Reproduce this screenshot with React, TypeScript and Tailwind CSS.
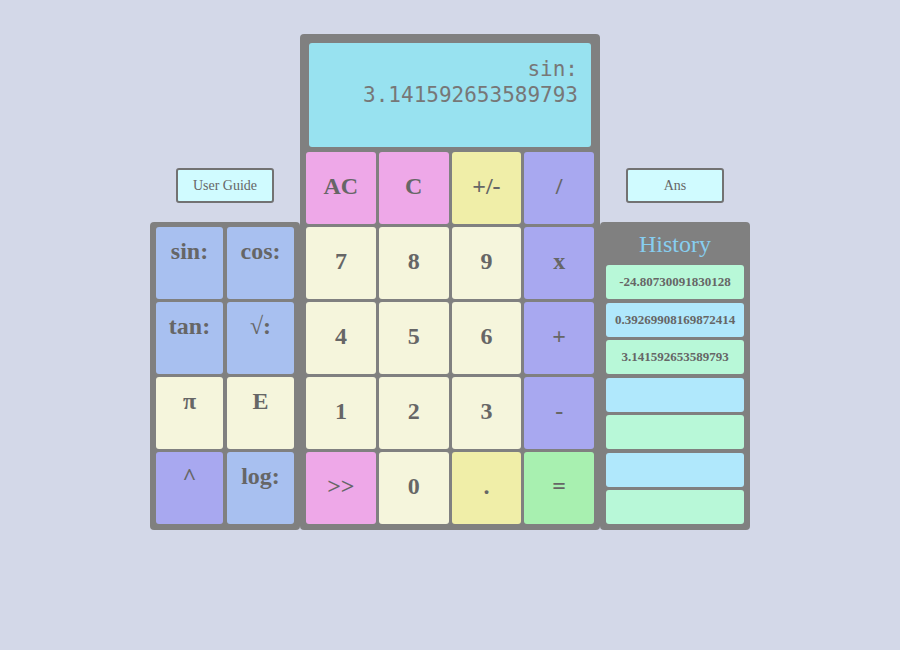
const serif = { fontFamily: '"Liberation Serif", "Times New Roman", serif' }

const keys: { label: string; bg: string }[] = [
  { label: "AC", bg: "bg-[#eea8e8]" },
  { label: "C", bg: "bg-[#eea8e8]" },
  { label: "+/-", bg: "bg-[#f0eea8]" },
  { label: "/", bg: "bg-[#a8a8f0]" },
  { label: "7", bg: "bg-[#f5f5dc]" },
  { label: "8", bg: "bg-[#f5f5dc]" },
  { label: "9", bg: "bg-[#f5f5dc]" },
  { label: "x", bg: "bg-[#a8a8f0]" },
  { label: "4", bg: "bg-[#f5f5dc]" },
  { label: "5", bg: "bg-[#f5f5dc]" },
  { label: "6", bg: "bg-[#f5f5dc]" },
  { label: "+", bg: "bg-[#a8a8f0]" },
  { label: "1", bg: "bg-[#f5f5dc]" },
  { label: "2", bg: "bg-[#f5f5dc]" },
  { label: "3", bg: "bg-[#f5f5dc]" },
  { label: "-", bg: "bg-[#a8a8f0]" },
  { label: ">>", bg: "bg-[#eea8e8]" },
  { label: "0", bg: "bg-[#f5f5dc]" },
  { label: ".", bg: "bg-[#f0eea8]" },
  { label: "=", bg: "bg-[#a8f0b0]" },
]

const sci: { label: string; bg: string }[] = [
  { label: "sin:", bg: "bg-[#a8c0f0]" },
  { label: "cos:", bg: "bg-[#a8c0f0]" },
  { label: "tan:", bg: "bg-[#a8c0f0]" },
  { label: "√:", bg: "bg-[#a8c0f0]" },
  { label: "π", bg: "bg-[#f5f5dc]" },
  { label: "E", bg: "bg-[#f5f5dc]" },
  { label: "^", bg: "bg-[#a8a8f0]" },
  { label: "log:", bg: "bg-[#a8c0f0]" },
]

const history = [
  "-24.80730091830128",
  "0.39269908169872414",
  "3.141592653589793",
  "",
  "",
  "",
  "",
]

function TopButton({ label }: { label: string }) {
  return (
    <button
      style={serif}
      className="w-[98px] h-[35px] rounded-[3px] border-2 border-[#727272] bg-[#d0fbff] text-[14px] text-[#666666]"
    >
      {label}
    </button>
  )
}

export default function App() {
  return (
    <div className="min-h-[650px] w-full bg-[#d3d8e8] pt-[34px]">
      <div className="flex justify-center items-end">
        {/* Scientific */}
        <div className="w-[150px] flex flex-col items-center">
          <div className="mb-[19px]">
            <TopButton label="User Guide" />
          </div>
          <div className="w-[150px] h-[308px] rounded-[4px] bg-[#808080] pt-[5px] px-[6px] pb-[6px] grid grid-cols-2 gap-x-[4px] gap-y-[3px] auto-rows-[72px]">
            {sci.map((k) => (
              <button
                key={k.label}
                style={serif}
                className={`${k.bg} rounded-[3px] flex justify-center items-start pt-[6px] text-[24px] font-bold text-[#666666]`}
              >
                {k.label}
              </button>
            ))}
          </div>
        </div>

        {/* Main */}
        <div className="w-[300px] h-[496px] rounded-[4px] bg-[#808080] pt-[9px] px-[6px] pb-[6px] flex flex-col">
          <div
            style={{ fontFamily: '"DejaVu Sans Mono", monospace' }}
            className="mx-[3px] h-[104px] rounded-[3px] bg-[#98e2f0] pt-[13px] pr-[13px] text-right text-[21px] leading-[26px] text-[#777777]"
          >
            <div>sin:</div>
            <div>3.141592653589793</div>
          </div>
          <div className="mt-[5px] grid grid-cols-4 gap-[3px] auto-rows-[72px]">
            {keys.map((k) => (
              <button
                key={k.label}
                style={serif}
                className={`${k.bg} rounded-[3px] flex items-center justify-center pb-[4px] text-[24px] font-bold text-[#666666]`}
              >
                {k.label}
              </button>
            ))}
          </div>
        </div>

        {/* History */}
        <div className="w-[150px] flex flex-col items-center">
          <div className="mb-[19px]">
            <TopButton label="Ans" />
          </div>
          <div className="w-[150px] h-[308px] rounded-[4px] bg-[#808080] px-[6px] pb-[6px] flex flex-col">
            <div style={serif} className="h-[43px] flex items-center justify-center text-[24px] text-[#87cef0]">
              History
            </div>
            <div className="flex flex-col gap-[3.5px]">
              {history.map((h, i) => (
                <div
                  key={i}
                  style={serif}
                  className={`${i % 2 === 0 ? "bg-[#b8f8d8]" : "bg-[#b0e8fc]"} h-[34px] rounded-[3px] flex items-center justify-center text-[13px] font-bold text-[#666666]`}
                >
                  {h}
                </div>
              ))}
            </div>
          </div>
        </div>
      </div>
    </div>
  )
}
